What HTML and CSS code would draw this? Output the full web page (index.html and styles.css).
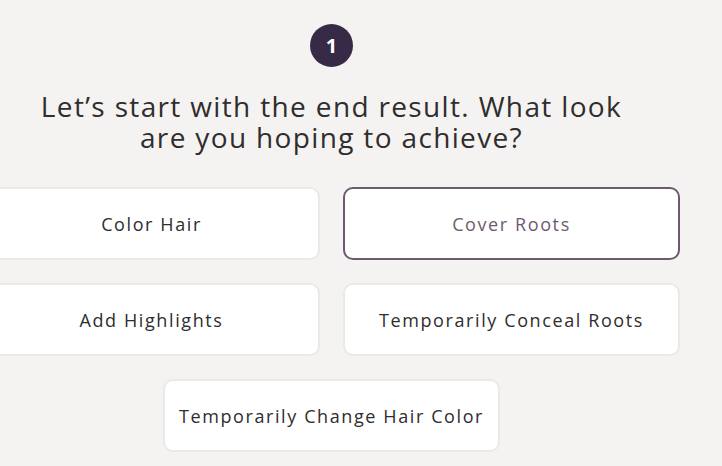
FILE: index.html
```html
<!DOCTYPE html>
<html lang="en">
<head>
<meta charset="utf-8">
<link rel="stylesheet" href="styles.css">
</head>
<body>
<main class="quiz">
  <div class="step">1</div>
  <h1 class="question">Let’s start with the end result. What look<br>are you hoping to achieve?</h1>
  <div class="options">
    <button class="option">Color Hair</button>
    <button class="option selected">Cover Roots</button>
    <button class="option">Add Highlights</button>
    <button class="option">Temporarily Conceal Roots</button>
    <button class="option wide">Temporarily Change Hair Color</button>
  </div>
</main>
</body>
</html>
```
FILE: styles.css
```css
html, body {
  margin: 0;
  padding: 0;
  background: #f5f3f1;
  overflow: hidden;
}
body {
  font-family: "Open Sans", Lato, sans-serif;
  color: #2f2d2e;
}
.quiz {
  width: 697px;
  margin-left: -17px;
  display: flex;
  flex-direction: column;
  align-items: center;
  padding-top: 24px;
}
.step {
  width: 43px;
  height: 43px;
  border-radius: 50%;
  background: #372a47;
  color: #fff;
  font-weight: 700;
  font-size: 20px;
  display: flex;
  align-items: center;
  justify-content: center;
}
.question {
  margin: 24px 0 0;
  font-weight: 400;
  font-size: 28px;
  line-height: 31px;
  letter-spacing: 1.35px;
  text-align: center;
  color: #2f2d2e;
}
.options {
  margin-top: 34px;
  display: grid;
  grid-template-columns: 337px 337px;
  gap: 23px 23px;
  justify-content: center;
}
.option {
  height: 73px;
  background: #fff;
  border: 2px solid #ebe9e8;
  border-radius: 10px;
  font-family: "Open Sans", Lato, sans-serif;
  font-size: 18px;
  letter-spacing: 1.6px;
  color: #2f2d2e;
  padding: 0;
}
.option.selected {
  border-color: #6e5a70;
  color: #6e5a70;
}
.option.wide {
  grid-column: 1 / span 2;
  justify-self: center;
  width: 337px;
}
```
